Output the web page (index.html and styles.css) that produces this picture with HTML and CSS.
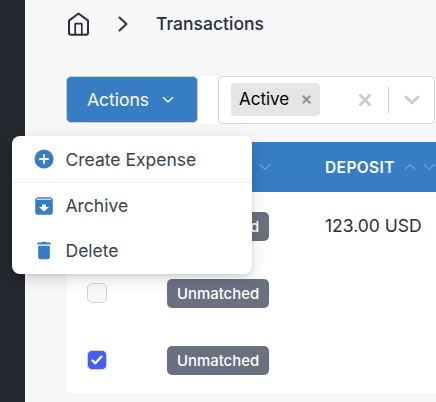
FILE: index.html
```html
<!DOCTYPE html>
<html lang="en">
<head>
<meta charset="utf-8">
<title>Transactions</title>
<link rel="stylesheet" href="styles.css">
</head>
<body>
<div class="app">
  <aside class="sidebar"></aside>
  <main class="main">
    <nav class="breadcrumb">
      <svg class="home" width="23" height="24" viewBox="0 0 23 24" fill="none" stroke="#2a303d" stroke-linejoin="round"><path stroke-width="2" d="M2 8.600 11.500 1.500l9.500 7.100v12.200a2 2 0 0 1-2 2H4a2 2 0 0 1-2-2z"/><path stroke-width="1.700" d="M8.200 22.500V11.700h6.600v10.800"/></svg>
      <svg class="sep" width="10" height="16" viewBox="0 0 10 16" fill="none" stroke="#2a303d" stroke-width="2" stroke-linecap="round" stroke-linejoin="round"><path d="m1.500 1.500 7 6.500-7 6.500"/></svg>
      <span class="crumb">Transactions</span>
    </nav>
    <div class="toolbar">
      <div class="actions">
        <button class="actions-button" type="button">Actions
          <svg width="12" height="8" viewBox="0 0 12 8" fill="none" stroke="#fff" stroke-width="1.400" stroke-linecap="round" stroke-linejoin="round"><path d="m1.400 1.500 4.600 4.600 4.600-4.600"/></svg>
        </button>
        <div class="menu">
          <div class="item first">
            <svg width="20" height="20" viewBox="0 0 20 20"><circle cx="10" cy="10" r="9.500" fill="#377dc3"/><path d="M10 5.200v9.600M5.200 10h9.600" stroke="#fff" stroke-width="1.800"/></svg>
            <span>Create Expense</span>
          </div>
          <div class="item">
            <svg width="20" height="20" viewBox="0 0 20 20"><path fill="#377dc3" d="M3.200 1.300h13.600l2 2.200v13a2.300 2.300 0 0 1-2.300 2.200h-13a2.300 2.300 0 0 1-2.300-2.200v-13z"/><path d="M3 3.200h14" stroke="#fff" stroke-width="1"/><path fill="#fff" d="M8 8.500h4v2.500h3L10 15.500l-5-4.500h3z"/></svg>
            <span>Archive</span>
          </div>
          <div class="item">
            <svg width="20" height="20" viewBox="0 0 20 20"><path fill="#377dc3" d="M3.400 1.600h4l.8-.9h3.600l.8.900h4v2H3.400zM4.200 4.700h11.600v11.500a2 2 0 0 1-2 2H6.200a2 2 0 0 1-2-2z"/></svg>
            <span>Delete</span>
          </div>
        </div>
      </div>
      <div class="select">
        <span class="tag">Active
          <svg width="9" height="9" viewBox="0 0 9 9" stroke="#929292" stroke-width="2"><path d="m.8.800 7.400 7.400M8.200.800.800 8.200"/></svg>
        </span>
        <svg class="clear" width="14" height="14" viewBox="0 0 14 14" stroke="#ccc" stroke-width="2.800"><path d="m1.500 1.500 11 11M12.500 1.500l-11 11"/></svg>
        <span class="rule"></span>
        <svg class="down" width="16" height="10" viewBox="0 0 16 10" fill="none" stroke="#ccc" stroke-width="2.900" stroke-linecap="round"><path d="m2 2 6 5.700L14 2"/></svg>
      </div>
    </div>
    <section class="table">
      <div class="row head">
        <span></span>
        <span class="status-head"><svg class="sort" width="12" height="8" viewBox="0 0 12 8"><path d="m.7 1.300 5.300 5.200 5.300-5.200"/></svg></span>
        <span class="deposit-head">DEPOSIT
          <svg class="sort up" width="12" height="8" viewBox="0 0 12 8"><path d="M.7 6.700 6 1.500l5.300 5.200"/></svg>
          <svg class="sort" width="12" height="8" viewBox="0 0 12 8"><path d="m.7 1.300 5.300 5.200 5.300-5.200"/></svg>
        </span>
      </div>
      <div class="row">
        <span class="check"></span>
        <span><span class="badge">Unmatched</span></span>
        <span class="amount">123.00 USD</span>
      </div>
      <div class="row">
        <span class="check"></span>
        <span><span class="badge">Unmatched</span></span>
      </div>
      <div class="row">
        <span class="check on"><svg width="12" height="10" viewBox="0 0 12 10" fill="none" stroke="#fff" stroke-width="2.400" stroke-linecap="round" stroke-linejoin="round"><path d="m1.500 5.500 2.800 2.700 6-6.500"/></svg></span>
        <span><span class="badge">Unmatched</span></span>
      </div>
    </section>
  </main>
</div>
</body>
</html>
```
FILE: styles.css
```css
* { box-sizing: border-box; }
body {
  margin: 0;
  overflow: hidden;
  font-family: Inter, "Liberation Sans", sans-serif;
  color: #2a303d;
}
svg { display: block; flex: none; }
.app { display: flex; height: 402px; }
.sidebar { flex: none; width: 25px; background: #242930; }
.main { flex: 1; min-width: 0; padding-left: 41px; background: #f7f7f7; }
.breadcrumb {
  display: flex;
  align-items: center;
  height: 48px;
  padding-left: 1px;
  font-size: 17.5px;
  font-weight: 500;
}
.home { margin-bottom: 1px; }
.sep { margin-left: 28px; margin-bottom: 1px; }
.crumb { margin-left: 28px; padding-bottom: 2px; }
.toolbar {
  display: flex;
  height: 48px;
  margin-top: 28px;
  background: #fff;
}
.actions { position: relative; flex: none; width: 132px; }
.actions-button {
  display: flex;
  align-items: center;
  justify-content: space-between;
  width: 132px;
  height: 47px;
  padding: 0 23px 0 20px;
  border: 1px solid #c5cbd5;
  border-radius: 5px;
  background: #377dc3;
  color: #fff;
  font: 400 17.5px Inter, sans-serif;
}
.menu {
  position: absolute;
  z-index: 2;
  top: 60px;
  left: -54px;
  width: 240px;
  height: 138px;
  border-radius: 8px;
  background: #fff;
  box-shadow: 0 5px 16px rgba(0, 0, 0, .14), 0 2px 4px rgba(0, 0, 0, .08);
}
.item {
  display: flex;
  align-items: center;
  gap: 11.5px;
  height: 45px;
  padding-left: 22px;
  color: #3a3f4c;
  font-size: 17.5px;
}
.item.first { height: 47px; border-bottom: 1px solid #f1f1f3; }
.select {
  display: flex;
  flex: none;
  align-items: center;
  width: 217px;
  margin-left: 20px;
  padding-left: 12px;
  border: 1px solid #d1d5db;
  border-radius: 4px;
  background: #fff;
}
.tag {
  display: flex;
  align-items: center;
  justify-content: space-between;
  width: 89px;
  height: 33px;
  margin-bottom: 1px;
  padding: 0 9px 1px 8px;
  border-radius: 4px;
  background: #e5e5e5;
  color: #000;
  font-size: 17px;
}
.clear { margin-left: 38px; }
.rule { width: 1px; height: 26px; margin-left: 16px; background: #ccc; }
.down { margin-left: 15px; }
.table {
  margin: 18px 0 0 1px;
  border-radius: 0 0 0 4px;
  background: #fff;
}
.row {
  display: grid;
  grid-template-columns: 100px 158px 1fr;
  align-items: center;
  height: 67px;
  padding-top: 1px;
}
.head { height: 50px; padding-top: 0; background: #377dc3; color: #fff; }
.status-head { padding-left: 92px; }
.deposit-head {
  display: flex;
  align-items: center;
  gap: 7px;
  font-size: 15.5px;
  font-weight: 600;
  letter-spacing: .4px;
}
.sort { fill: none; stroke: #70a2d4; stroke-width: 1.2; }
.sort.up { margin-left: 2px; }
.badge {
  display: flex;
  align-items: center;
  width: 102px;
  height: 29px;
  padding: 1px 0 0 10px;
  border-radius: 5px;
  background: #6b7080;
  color: #fff;
  font-size: 14.9px;
  font-weight: 500;
}
.amount { padding-bottom: 2px; font-size: 17.5px; }
.check {
  display: flex;
  align-items: center;
  justify-content: center;
  width: 20px;
  height: 20px;
  margin-left: 20px;
  border: 1px solid #d1d3dc;
  border-radius: 5px;
  background: #f8f8f8;
}
.check.on { background: #4361ee; }
```
